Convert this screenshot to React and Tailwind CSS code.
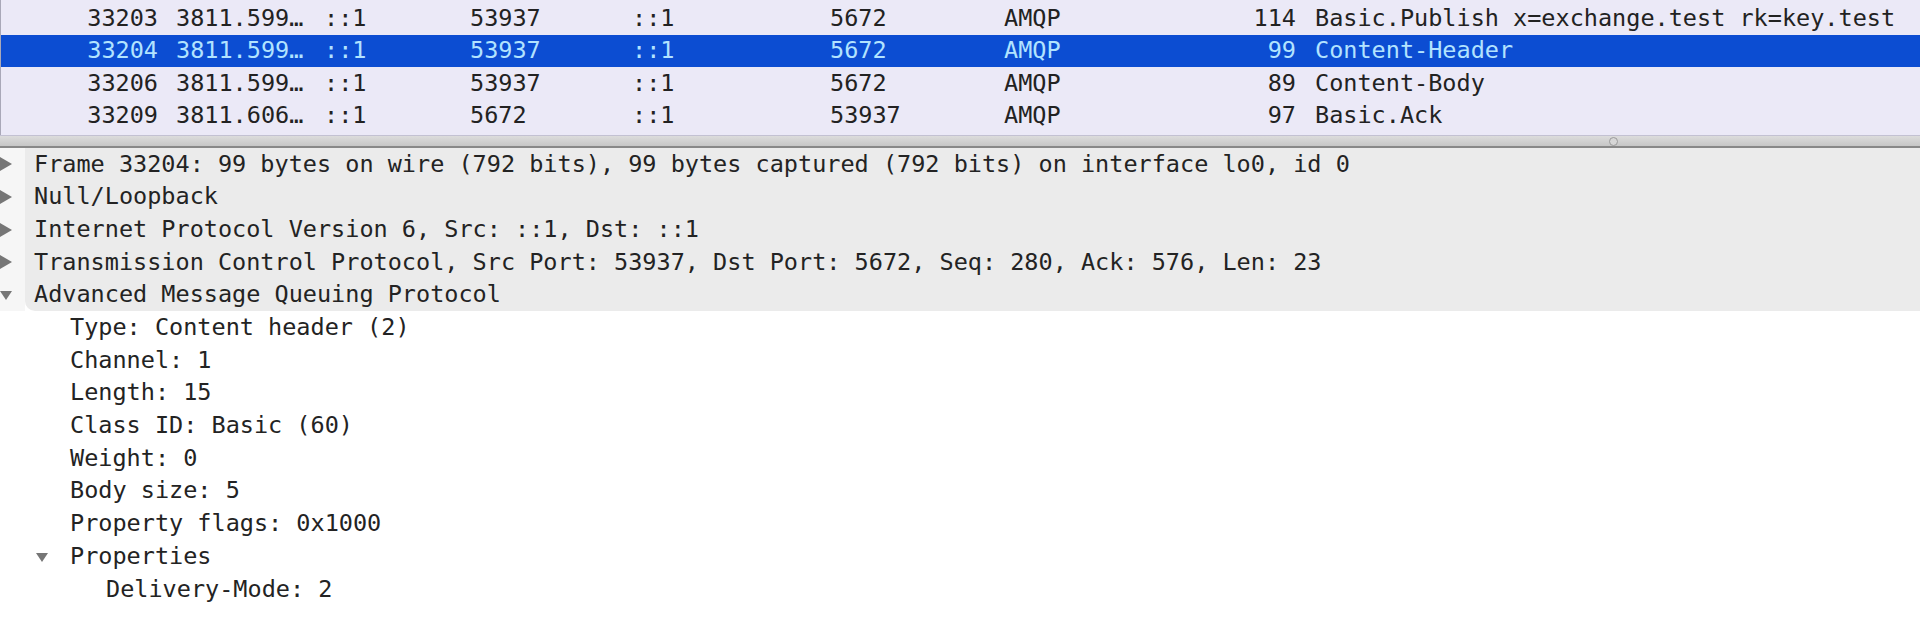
import React from 'react';

const packets = [
  { no: '33203', time: '3811.599…', src: '::1', sport: '53937', dst: '::1', dport: '5672', proto: 'AMQP', len: '114', info: 'Basic.Publish x=exchange.test rk=key.test' },
  { no: '33204', time: '3811.599…', src: '::1', sport: '53937', dst: '::1', dport: '5672', proto: 'AMQP', len: '99', info: 'Content-Header', selected: true },
  { no: '33206', time: '3811.599…', src: '::1', sport: '53937', dst: '::1', dport: '5672', proto: 'AMQP', len: '89', info: 'Content-Body' },
  { no: '33209', time: '3811.606…', src: '::1', sport: '5672', dst: '::1', dport: '53937', proto: 'AMQP', len: '97', info: 'Basic.Ack' },
];

const topLevel = [
  { text: 'Frame 33204: 99 bytes on wire (792 bits), 99 bytes captured (792 bits) on interface lo0, id 0', open: false },
  { text: 'Null/Loopback', open: false },
  { text: 'Internet Protocol Version 6, Src: ::1, Dst: ::1', open: false },
  { text: 'Transmission Control Protocol, Src Port: 53937, Dst Port: 5672, Seq: 280, Ack: 576, Len: 23', open: false },
  { text: 'Advanced Message Queuing Protocol', open: true },
];

const amqpFields = [
  'Type: Content header (2)',
  'Channel: 1',
  'Length: 15',
  'Class ID: Basic (60)',
  'Weight: 0',
  'Body size: 5',
  'Property flags: 0x1000',
];

const Triangle = ({ open, className = '' }) => (
  <svg width="13" height="16" viewBox="0 0 13 16" className={className}>
    {open ? (
      <path d="M0 4 L12 4 L6 13 Z" fill="#767676" />
    ) : (
      <path d="M0 1 L12 8 L0 15 Z" fill="#767676" />
    )}
  </svg>
);

const PacketRow = ({ p }) => (
  <div
    className={`flex items-center h-[32.5px] whitespace-nowrap ${
      p.selected ? 'bg-[#0c4dd2] text-[#b2e3ff]' : 'text-[#222222]'
    }`}
  >
    <span className="w-[157px] shrink-0 text-right">{p.no}</span>
    <span className="w-[166px] shrink-0 pl-[18px]">{p.time}</span>
    <span className="w-[146px] shrink-0">{p.src}</span>
    <span className="w-[162px] shrink-0">{p.sport}</span>
    <span className="w-[198px] shrink-0">{p.dst}</span>
    <span className="w-[174px] shrink-0">{p.dport}</span>
    <span className="w-[200px] shrink-0">{p.proto}</span>
    <span className="w-[92px] shrink-0 text-right">{p.len}</span>
    <span className="pl-[19px]">{p.info}</span>
  </div>
);

export default function App() {
  return (
    <div
      className="w-[1920px] h-[621px] overflow-hidden bg-white text-[23.5px] leading-none"
      style={{ fontFamily: '"DejaVu Sans Mono", "Liberation Mono", monospace' }}
    >
      {/* packet list */}
      <div className="bg-[#ebe9f7] pt-[2px] pb-[3px] border-l border-[#a9a8b8]">
        {packets.map((p) => (
          <PacketRow key={p.no} p={p} />
        ))}
      </div>

      {/* splitter */}
      <div className="relative h-[13px] bg-gradient-to-b from-[#dcdcdc] to-[#c6c6c6] border-t border-[#c3c1d2] border-b-2 border-b-[#888888]">
        <div className="absolute left-[1609px] top-[1px] w-[9px] h-[9px] rounded-full border border-[#9a9a9a] bg-[#d6d6d6]" />
      </div>

      {/* packet details */}
      <div className="flex text-[#232323]">
        <div className="w-[25px] shrink-0 bg-[#f6f6f6]">
          {topLevel.map((t) => (
            <div key={t.text} className="h-[32.7px] flex items-center">
              <Triangle open={t.open} />
            </div>
          ))}
        </div>
        <div className="flex-1 bg-[#ebebeb] rounded-bl-[10px]">
          {topLevel.map((t) => (
            <div key={t.text} className="h-[32.7px] flex items-center pl-[9px] whitespace-nowrap">
              {t.text}
            </div>
          ))}
        </div>
      </div>

      <div className="text-[#232323]">
        {amqpFields.map((f) => (
          <div key={f} className="h-[32.7px] flex items-center pl-[70px] whitespace-nowrap">
            {f}
          </div>
        ))}
        <div className="h-[32.7px] flex items-center whitespace-nowrap">
          <div className="w-[70px] shrink-0 pl-[36px] flex items-center">
            <Triangle open />
          </div>
          <span>Properties</span>
        </div>
        <div className="h-[32.7px] flex items-center pl-[106px] whitespace-nowrap">
          Delivery-Mode: 2
        </div>
      </div>
    </div>
  );
}
